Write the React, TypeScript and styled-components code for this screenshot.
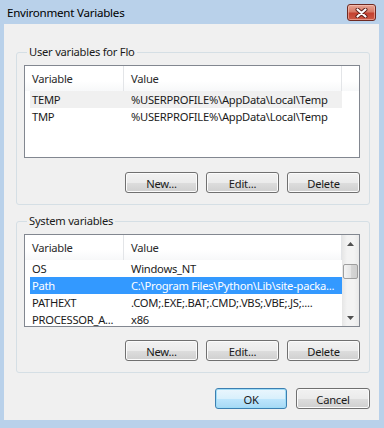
import React from 'react';
import styled, { createGlobalStyle } from 'styled-components';

const GlobalStyle = createGlobalStyle`
  html, body {
    margin: 0;
    padding: 0;
    background: #b9d1ea;
  }
  body {
    font-family: 'Noto Sans', 'Open Sans', sans-serif;
    font-size: 11.2px;
    letter-spacing: -0.25px;
    color: #1a1a1a;
  }
`;

interface Variable {
  name: string;
  value: string;
  state?: 'selected' | 'inactive';
}

const userVars: Variable[] = [
  { name: 'TEMP', value: '%USERPROFILE%\\AppData\\Local\\Temp', state: 'inactive' },
  { name: 'TMP', value: '%USERPROFILE%\\AppData\\Local\\Temp' },
];

const systemVars: Variable[] = [
  { name: 'OS', value: 'Windows_NT' },
  { name: 'Path', value: 'C:\\Program Files\\Python\\Lib\\site-packa...', state: 'selected' },
  { name: 'PATHEXT', value: '.COM;.EXE;.BAT;.CMD;.VBS;.VBE;.JS;....' },
  { name: 'PROCESSOR_A...', value: 'x86' },
];

const Window = styled.div`
  width: 384px;
  height: 428px;
  box-sizing: border-box;
  display: flex;
  flex-direction: column;
  background: #b9d1ea;
  padding: 0 5px 8px 4px;
`;

const TitleBar = styled.div`
  height: 24px;
  flex: none;
  display: flex;
  justify-content: space-between;
  padding: 0 3px;
`;

const Title = styled.span`
  line-height: 26px;
  font-size: 11.6px;
  color: #000;
`;

const CloseButton = styled.div`
  margin-top: 4px;
  width: 29px;
  height: 17px;
  box-sizing: border-box;
  border: 1px solid #6e2a22;
  border-radius: 3px;
  background: linear-gradient(#e6a595 0%, #d77a66 45%, #c4412f 55%, #cc5a46 100%);
  box-shadow: inset 0 0 0 1px rgba(255, 210, 200, 0.5);
  display: flex;
  align-items: center;
  justify-content: center;
`;

const Client = styled.div`
  flex: 1;
  background: #f0f0f0;
  padding: 20px 9px 0 12px;
  display: flex;
  flex-direction: column;
`;

const GroupBox = styled.fieldset<{ $gap?: number }>`
  margin: ${({ $gap }) => $gap ?? 0}px 0 0;
  padding: 0 9px 11px 7px;
  border: 1px solid #d5dfe5;
  border-radius: 3px;
  min-width: 0;
`;

const Legend = styled.legend`
  padding: 0 2px;
  margin-left: 3px;
  line-height: 16px;
`;

const ListView = styled.div`
  margin-top: 5px;
  height: 93px;
  box-sizing: border-box;
  border: 1px solid #828790;
  background: #fff;
  display: flex;
  overflow: hidden;
`;

const ListMain = styled.div`
  flex: 1;
  min-width: 0;
  display: flex;
  flex-direction: column;
`;

const Header = styled.div`
  height: 25px;
  flex: none;
  display: flex;
  background: linear-gradient(#fff, #fff 60%, #f7f8f9);
`;

const HeadCell = styled.div<{ $width: number }>`
  width: ${({ $width }) => $width}px;
  flex: none;
  box-sizing: border-box;
  padding-left: 7px;
  line-height: 26px;
  border-right: 1px solid #e3e5e8;
  color: #2a2a2a;
`;

const Row = styled.div<{ $state?: 'selected' | 'inactive' }>`
  margin-left: 5px;
  width: 312px;
  height: 17px;
  display: flex;
  line-height: 18px;
  white-space: nowrap;
  background: ${({ $state }) =>
    $state === 'selected' ? '#3399ff' : $state === 'inactive' ? '#f0f0f0' : 'transparent'};
  color: ${({ $state }) => ($state === 'selected' ? '#fff' : '#1a1a1a')};
`;

const NameCell = styled.div`
  width: 94px;
  flex: none;
  box-sizing: border-box;
  padding-left: 2px;
  overflow: hidden;
`;

const ValueCell = styled.div`
  flex: 1;
  min-width: 0;
  padding-left: 7px;
  overflow: hidden;
`;

const ScrollBar = styled.div`
  width: 17px;
  flex: none;
  display: flex;
  flex-direction: column;
  background: linear-gradient(to right, #e6e6e6, #f3f3f3 30%, #f3f3f3 70%, #e9e9e9);
`;

const ArrowBox = styled.div`
  height: 17px;
  flex: none;
  display: flex;
  align-items: center;
  justify-content: center;
`;

const Track = styled.div`
  flex: 1;
  display: flex;
  flex-direction: column;
  align-items: center;
`;

const Thumb = styled.div`
  margin-top: 12px;
  width: 15px;
  height: 15px;
  box-sizing: border-box;
  border: 1px solid #9e9e9e;
  border-radius: 2px;
  background: linear-gradient(to right, #f4f4f4, #e6e6e6 50%, #d6d6d6 51%, #cfcfcf);
`;

const ButtonRow = styled.div<{ $gap: number; $top: number }>`
  margin-top: ${({ $top }) => $top}px;
  display: flex;
  justify-content: flex-end;
  gap: ${({ $gap }) => $gap}px;
`;

const Button = styled.button<{ $width?: number; $default?: boolean }>`
  width: ${({ $width }) => $width ?? 73}px;
  height: 21px;
  padding: 1px 0 0;
  margin: 0;
  font: inherit;
  letter-spacing: inherit;
  color: #1a1a1a;
  border: 1px solid ${({ $default }) => ($default ? '#3c7fb1' : '#707070')};
  border-radius: 3px;
  background: ${({ $default }) =>
    $default
      ? 'linear-gradient(#eaf6fd 0%, #d9f0fc 50%, #bee6fd 51%, #a7d9f5 100%)'
      : 'linear-gradient(#f2f2f2 0%, #ebebeb 50%, #dddddd 51%, #cfcfcf 100%)'};
  box-shadow: inset 0 0 0 1px ${({ $default }) => ($default ? '#9edcf7' : '#fbfbfb')};
`;

const CloseGlyph = () => (
  <svg width="13" height="10" viewBox="0 0 13 10">
    <path d="M2.5 1.5 L10.5 8.5 M10.5 1.5 L2.5 8.5" stroke="#5a1a14" strokeWidth="4" strokeLinecap="round" />
    <path d="M2.5 1.5 L10.5 8.5 M10.5 1.5 L2.5 8.5" stroke="#fff" strokeWidth="2.2" strokeLinecap="round" />
  </svg>
);

const Arrow = ({ down }: { down?: boolean }) => (
  <svg width="7" height="4" viewBox="0 0 7 4">
    <path d={down ? 'M0 0 H7 L3.5 4 Z' : 'M0 4 H7 L3.5 0 Z'} fill="#505050" />
  </svg>
);

const VariableList = ({ items, scroll }: { items: Variable[]; scroll?: boolean }) => (
  <ListView>
    <ListMain>
      <Header>
        <HeadCell $width={99}>Variable</HeadCell>
        <HeadCell $width={218}>Value</HeadCell>
      </Header>
      {items.map((v) => (
        <Row key={v.name} $state={v.state}>
          <NameCell>{v.name}</NameCell>
          <ValueCell>{v.value}</ValueCell>
        </Row>
      ))}
    </ListMain>
    {scroll && (
      <ScrollBar>
        <ArrowBox>
          <Arrow />
        </ArrowBox>
        <Track>
          <Thumb />
        </Track>
        <ArrowBox>
          <Arrow down />
        </ArrowBox>
      </ScrollBar>
    )}
  </ListView>
);

const EditButtons = ({ top }: { top: number }) => (
  <ButtonRow $gap={8} $top={top}>
    <Button>New...</Button>
    <Button>Edit...</Button>
    <Button>Delete</Button>
  </ButtonRow>
);

export default function App() {
  return (
    <>
      <GlobalStyle />
      <Window>
        <TitleBar>
          <Title>Environment Variables</Title>
          <CloseButton>
            <CloseGlyph />
          </CloseButton>
        </TitleBar>
        <Client>
          <GroupBox>
            <Legend>User variables for Flo</Legend>
            <VariableList items={userVars} />
            <EditButtons top={14} />
          </GroupBox>
          <GroupBox $gap={8}>
            <Legend>System variables</Legend>
            <VariableList items={systemVars} scroll />
            <EditButtons top={13} />
          </GroupBox>
          <ButtonRow $gap={9} $top={15}>
            <Button $width={72} $default>
              OK
            </Button>
            <Button $width={74}>Cancel</Button>
          </ButtonRow>
        </Client>
      </Window>
    </>
  );
}
